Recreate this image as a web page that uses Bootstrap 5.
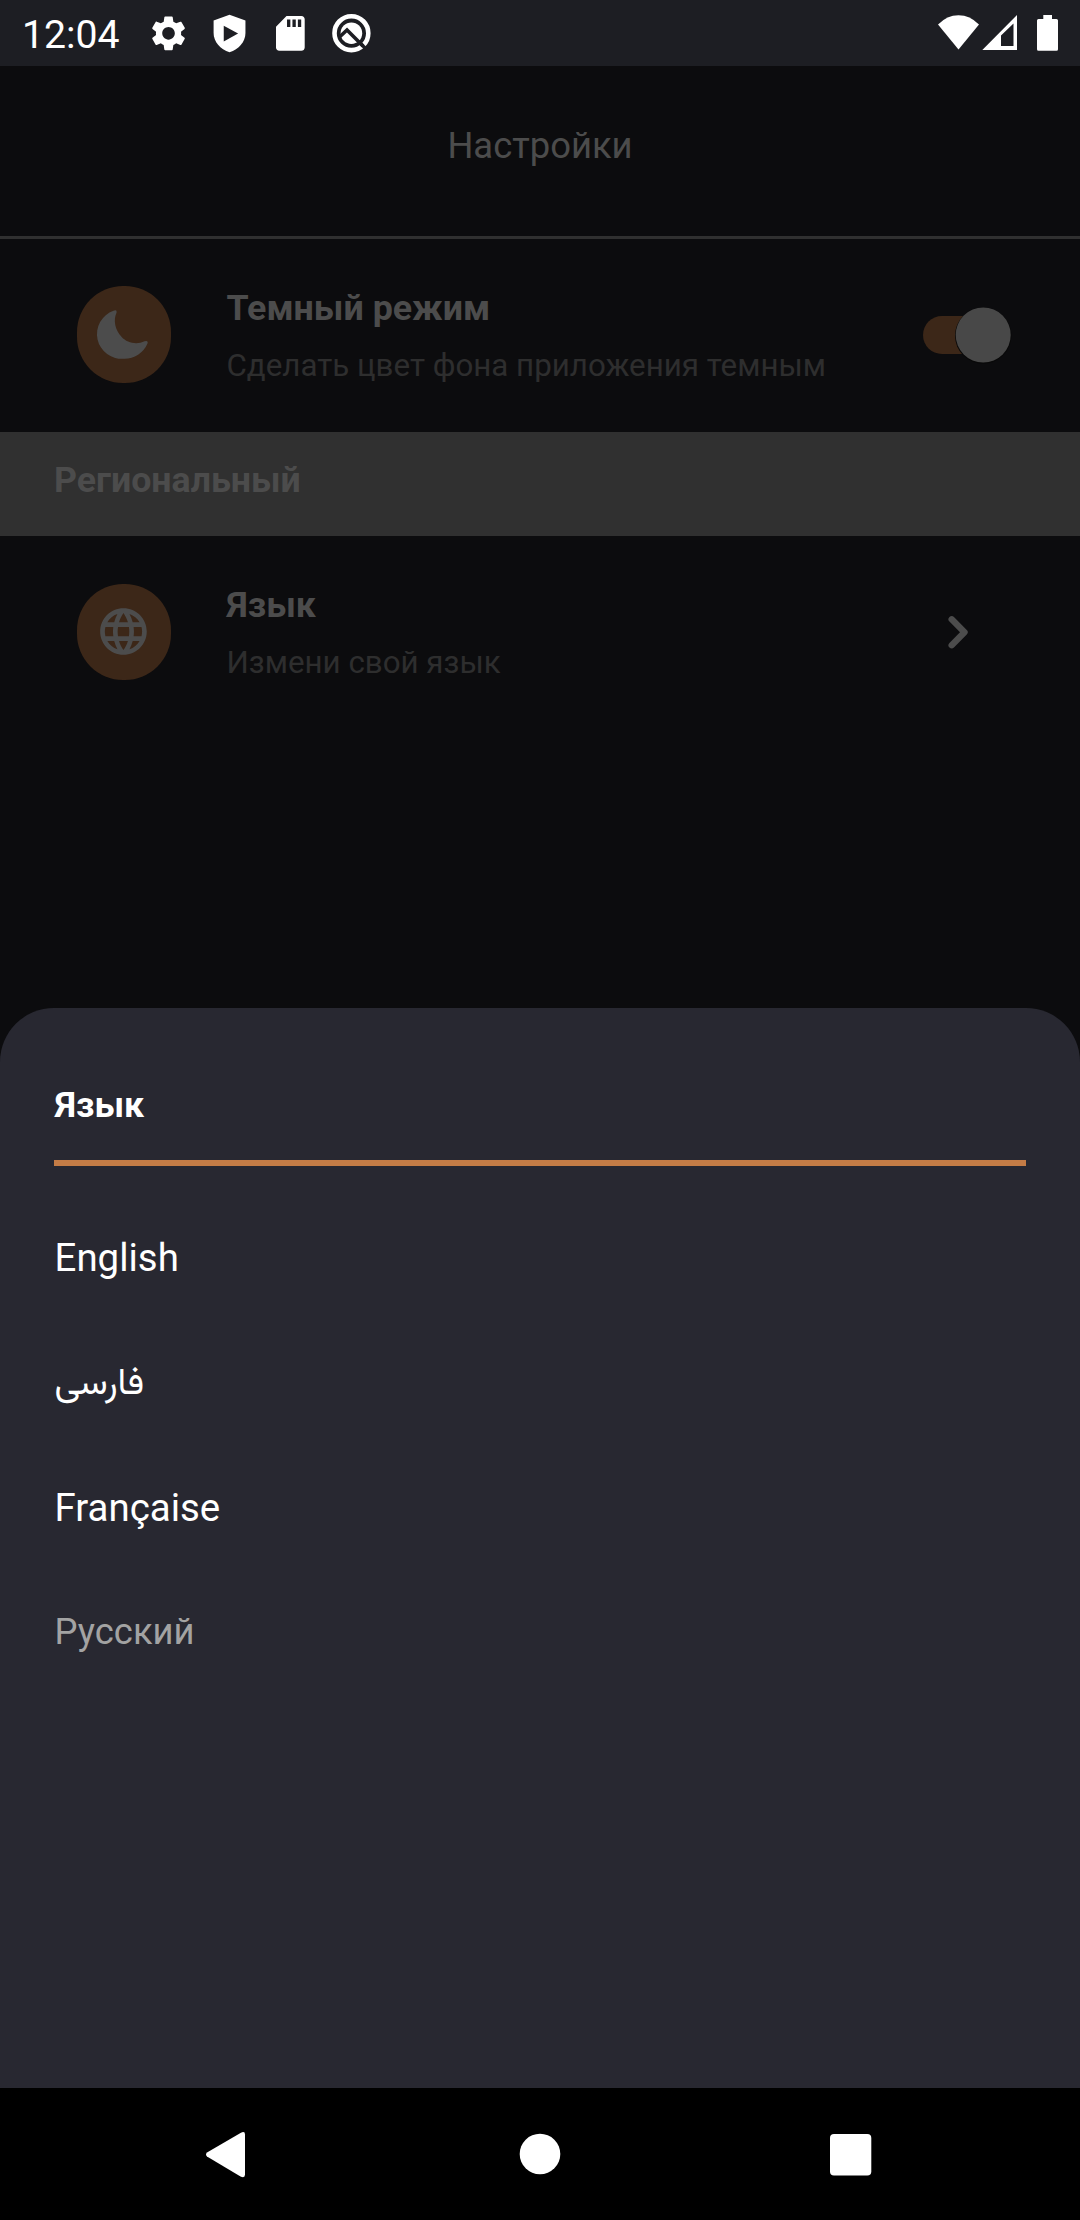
<!DOCTYPE html>
<html lang="ru">
<head>
<meta charset="utf-8">
<meta name="viewport" content="width=device-width, initial-scale=1">
<title>Настройки</title>
<link href="https://cdn.jsdelivr.net/npm/bootstrap@5.3.0/dist/css/bootstrap.min.css" rel="stylesheet">
<style>
  body { width: 1080px; height: 2220px; background: #0c0c0e; color: #4c4c4c; font-family: Roboto, sans-serif; overflow: hidden; }
  svg { display: block; flex: none; }
  .statusbar { height: 66px; background: #1d1e23; color: #fff; padding-left: 22px; }
  .clock { width: 125px; font-size: 39.2px; line-height: 66px; padding-top: 3px; }
  .notif { gap: 19px; }
  .appbar { height: 173px; border-bottom: 3px solid #303030; font-size: 36.4px; line-height: 159px; }
  .setting { padding-left: 77px; }
  .setting-first { height: 193px; }
  .setting-second { height: 472px; }
  .round-icon { width: 94px; border-radius: 46px; background: #3c2718; margin-right: 55.5px; overflow: hidden; }
  .setting-first .round-icon { height: 97px; margin-top: 47px; }
  .setting-second .round-icon { height: 96px; margin-top: 48px; }
  .setting-text { width: 689.5px; padding-top: 41px; }
  .setting-title { font-size: 35.8px; line-height: 57px; }
  .setting-note { font-size: 31.3px; line-height: 58px; color: #2e2e2e; white-space: nowrap; }
  .region { height: 104px; background: #303030; font-size: 35.7px; line-height: 96px; padding-left: 54px; }
  .sheet { height: 1080px; background: #282831; border-radius: 54px 54px 0 0; padding: 60px 54px 0; color: #fff; }
  .sheet-title { height: 98px; border-bottom: 6px solid #c47c46; font-size: 35.8px; line-height: 74px; text-indent: .8px; }
  .lang-list { padding: 29px 0 0 .6px; }
  .lang { font-size: 38.4px; line-height: 125px; height: 125px; }
  .lang-fa { line-height: 121px; }
  .lang-fa span { font-family: Vazirmatn, "Noto Naskh Arabic", "DejaVu Sans", sans-serif; font-size: 37px; line-height: 1; }
  .lang-active { font-size: 36.4px; line-height: 124px; color: #a3a3a3; }
  .navkeys { height: 132px; background: #000; }
</style>
</head>
<body class="d-flex flex-column">
  <header class="statusbar d-flex align-items-center">
    <span class="clock">12:04</span>
    <div class="notif d-flex align-items-center">
      <svg width="42" height="42" viewBox="0 0 24 24" fill="#fff"><path d="M19.14 12.94c.04-.3.06-.61.06-.94 0-.32-.02-.64-.07-.94l2.03-1.58c.18-.14.23-.41.12-.61l-1.92-3.32c-.12-.22-.37-.29-.59-.22l-2.39.96c-.5-.38-1.03-.7-1.62-.94L14.4 2.81c-.04-.24-.24-.41-.48-.41h-3.84c-.24 0-.43.17-.47.41L9.25 5.35c-.59.24-1.13.57-1.62.94l-2.39-.96c-.22-.08-.47 0-.59.22L2.74 8.87c-.12.21-.08.47.12.61l2.03 1.58c-.05.3-.09.63-.09.94s.02.64.07.94l-2.03 1.58c-.18.14-.23.41-.12.61l1.92 3.32c.12.22.37.29.59.22l2.39-.96c.5.38 1.03.7 1.62.94l.36 2.54c.05.24.24.41.48.41h3.84c.24 0 .44-.17.47-.41l.36-2.54c.59-.24 1.13-.56 1.62-.94l2.39.96c.22.08.47 0 .59-.22l1.92-3.32c.12-.22.07-.47-.12-.61l-2.01-1.58zM12 15.6c-1.98 0-3.6-1.62-3.6-3.6s1.62-3.6 3.6-3.6 3.6 1.62 3.6 3.6-1.62 3.6-3.6 3.6z" transform="translate(.3 .2)"/></svg>
      <svg width="42" height="42" viewBox="0 0 24 24"><path fill="#fff" d="M12.300 1.500 3.200 4.900v7.100c0 5 3.800 9.300 9.100 11 5.300-1.700 9.100-6 9.100-11V4.900z"/><path fill="#1d1e23" d="M9 7.800v9l8.200-4.500z"/></svg>
      <svg width="42" height="42" viewBox="0 0 24 24"><path fill="#fff" d="M18.500 2.300H10L4 8.400v11.900c0 1 .8 1.900 1.900 1.900h12.600c1 0 1.900-.8 1.900-1.900V4.200c0-1-.8-1.900-1.900-1.900z"/><path fill="#1d1e23" d="M10.300 4.300h1.900v4.200h-1.900zM13.400 4.300h1.900v4.200h-1.900zM16.500 4.300h1.900v4.200h-1.900z"/></svg>
      <svg width="42" height="42" viewBox="0 0 42 42"><circle cx="21.400" cy="21.200" r="16.900" fill="none" stroke="#fff" stroke-width="4.600"/><circle cx="21.400" cy="21.200" r="10.800" fill="#fff"/><path d="M9 25.500 17 18 33 34" fill="none" stroke="#1d1e23" stroke-width="3.600"/><path d="M30 31l6.500 6.500" stroke="#1d1e23" stroke-width="3.400"/></svg>
    </div>
    <svg class="ms-auto" width="150" height="66" viewBox="930 0 150 66"><path fill="#fff" d="M938 24.500Q947 15.200 958.500 15.200T979 24.500L958.500 49.500z"/><path fill="#fff" fill-rule="evenodd" d="M982.300 50 1017 15v35zM1001 35.500V46h12.500V23.500z"/><path fill="#fff" d="M1043.300 15h8.700v4h4.500q1.500 0 1.500 1.500v28.800q0 1.500-1.500 1.500h-18q-1.500 0-1.500-1.500V20.500q0-1.500 1.500-1.500h4.800z"/></svg>
  </header>

  <nav class="appbar text-center">Настройки</nav>

  <section class="setting setting-first d-flex">
    <div class="round-icon">
      <svg width="94" height="97" viewBox="0 0 94 97"><path fill="#4c4c4c" d="M36.500 24.800Q40.200 23.300 39.600 26.500C36 34 38 44 44.700 51 50 57 60 59 67.500 55.200Q71.500 54 70.500 57.500A25 25 0 0 1 47 72.700 24.700 24.700 0 0 1 36.500 24.800Z"/></svg>
    </div>
    <div class="setting-text">
      <div class="setting-title fw-bold">Темный режим</div>
      <div class="setting-note">Сделать цвет фона приложения темным</div>
    </div>
    <svg width="110" height="193" viewBox="916 239 110 193"><rect x="923" y="316" width="80" height="38" rx="19" fill="#3c2718"/><circle cx="983.200" cy="335.600" r="28.200" fill="#090909"/><circle cx="983.200" cy="335" r="27.500" fill="#484848"/></svg>
  </section>

  <h2 class="region fw-bold mb-0">Региональный</h2>

  <section class="setting setting-second d-flex">
    <div class="round-icon">
      <svg width="94" height="96" viewBox="0 0 94 96"><path transform="translate(18.500 19.600) scale(2.330)" fill="#4c4c4c" d="M11.990 2C6.470 2 2 6.480 2 12s4.470 10 9.990 10C17.520 22 22 17.520 22 12S17.520 2 11.990 2zm6.930 6h-2.950c-.32-1.250-.78-2.450-1.380-3.560 1.840.63 3.370 1.910 4.330 3.560zM12 4.040c.83 1.200 1.480 2.530 1.910 3.960h-3.820c.43-1.430 1.080-2.760 1.910-3.960zM4.260 14C4.100 13.360 4 12.690 4 12s.1-1.360.26-2h3.380c-.08.66-.14 1.320-.14 2s.06 1.340.14 2H4.260zm.82 2h2.950c.32 1.250.78 2.450 1.380 3.560-1.840-.63-3.370-1.900-4.330-3.560zm2.950-8H5.080c.96-1.660 2.490-2.930 4.330-3.560C8.810 5.550 8.350 6.750 8.030 8zM12 19.960c-.83-1.200-1.480-2.530-1.910-3.960h3.820c-.43 1.430-1.080 2.760-1.910 3.960zM14.340 14H9.660c-.09-.66-.16-1.320-.16-2s.07-1.350.16-2h4.680c.09.65.16 1.320.16 2s-.07 1.340-.16 2zm.25 5.560c.6-1.110 1.060-2.310 1.380-3.560h2.950c-.96 1.650-2.490 2.930-4.330 3.560zM16.360 14c.08-.66.14-1.320.14-2s-.06-1.340-.14-2h3.380c.16.64.26 1.310.26 2s-.1 1.360-.26 2h-3.380z"/></svg>
    </div>
    <div class="setting-text">
      <div class="setting-title fw-bold">Язык</div>
      <div class="setting-note">Измени свой язык</div>
    </div>
    <svg width="110" height="193" viewBox="916 536 110 193"><path d="M951.700 619.300 964.500 632.200 951.700 645.200" fill="none" stroke="#4c4c4c" stroke-width="6.400" stroke-linecap="round" stroke-linejoin="round"/></svg>
  </section>

  <main class="sheet">
    <div class="sheet-title fw-bold">Язык</div>
    <ul class="lang-list list-unstyled mb-0">
      <li class="lang">English</li>
      <li class="lang lang-fa"><span lang="fa">فارسی</span></li>
      <li class="lang">Française</li>
      <li class="lang lang-active">Русский</li>
    </ul>
  </main>

  <footer class="navkeys">
    <svg width="1080" height="132" viewBox="0 2088 1080 132" fill="#fff"><path d="M207 2152.500 240.500 2133Q245 2130.500 245 2134.500V2174.500Q245 2178.500 240.500 2176.500L207 2156.500Q205 2154.500 207 2152.500z"/><circle cx="540" cy="2154" r="20.300"/><rect x="830" y="2134" width="41.300" height="41.500" rx="4"/></svg>
  </footer>
<script src="https://cdn.jsdelivr.net/npm/bootstrap@5.3.0/dist/js/bootstrap.bundle.min.js"></script>
</body>
</html>
